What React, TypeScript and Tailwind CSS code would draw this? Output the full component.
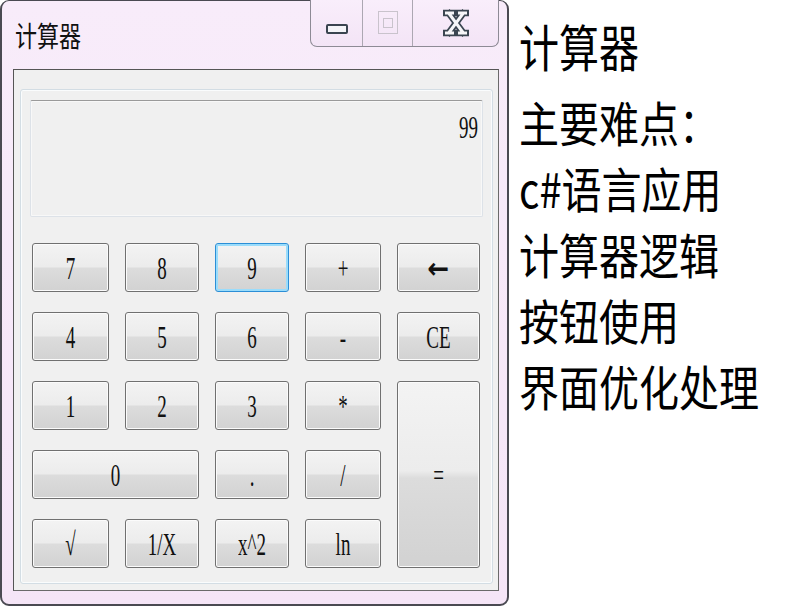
import React from "react";

const btnBase =
  "flex items-center justify-center rounded-[3px] border text-[19px] leading-none text-[#111] font-['Liberation_Serif','DejaVu_Serif',serif] bg-[linear-gradient(to_bottom,#f3f3f3_0%,#ececec_48%,#dcdcdc_52%,#d2d2d2_100%)]";

type B = { label: string; cls?: string; focus?: boolean; arrow?: boolean };

const buttons: B[] = [
  { label: "7" },
  { label: "8" },
  { label: "9", focus: true },
  { label: "+" },
  { label: "←", arrow: true },
  { label: "4" },
  { label: "5" },
  { label: "6" },
  { label: "-" },
  { label: "CE" },
  { label: "1" },
  { label: "2" },
  { label: "3" },
  { label: "*" },
  { label: "=", cls: "row-span-3" },
  { label: "0", cls: "col-span-2" },
  { label: "." },
  { label: "/" },
  { label: "√" },
  { label: "1/X" },
  { label: "x^2" },
  { label: "ln" },
];

function CalcButton({ b }: { b: B }) {
  const border = b.focus
    ? "border-[#2b8ed6] shadow-[inset_0_0_0_2px_#9adcfb]"
    : "border-[#707070] shadow-[inset_0_0_0_1px_#fbfbfb]";
  return (
    <div className={`${btnBase} ${border} ${b.cls ?? ""}`}>
      {b.arrow ? (
        <span className="inline-block scale-y-[1.1] font-['DejaVu_Sans',sans-serif] font-bold text-[26px]">{b.label}</span>
      ) : (
        <span className="inline-block scale-y-[1.7]">{b.label}</span>
      )}
    </div>
  );
}

export default function App() {
  return (
    <div className="w-[800px] h-[608px] bg-white flex font-['Noto_Sans_CJK_SC',sans-serif] overflow-hidden">
      {/* Window */}
      <div className="w-[509px] h-[606px] rounded-[9px] border border-l-2 border-b-2 border-r-2 border-[#4a4a52] bg-[linear-gradient(to_bottom,#f8ecfa_0%,#f5e5f7_100%)] flex flex-col">
        {/* Title bar */}
        <div className="h-[68px] flex items-start">
          <div className="ml-[13px] mt-[19px] text-[22px] leading-none text-[#111] font-['Noto_Sans_CJK_SC',sans-serif]">
            <span className="inline-block scale-y-[1.3] origin-top">计算器</span>
          </div>
          <div className="flex-1" />
          <div className="mr-[8px] -mt-px h-[47px] flex border border-t-0 border-[#8d8a95] rounded-b-[7px] bg-[linear-gradient(to_bottom,#f9eefb,#f3e4f6)] overflow-hidden">
            <div className="w-[52px] flex items-center justify-center border-r border-[#aca7b2]">
              <div className="mt-[12px] w-[22px] h-[10px] rounded-[2px] border-2 border-[#3a4450] bg-[#f4f4f8]" />
            </div>
            <div className="w-[50px] flex items-center justify-center border-r border-[#aca7b2]">
              <div className="-mt-[1px] w-[20px] h-[23px] border border-[#c9c3cc] flex items-center justify-center">
                <div className="w-[10px] h-[10px] border border-[#c9c3cc]" />
              </div>
            </div>
            <div className="w-[85px] flex items-center justify-center">
              <svg width="26" height="28" viewBox="0 0 26 28" className="-mt-[1px]">
                <g fill="none" strokeLinecap="square" strokeLinejoin="round">
                  <path d="M6 4.5 L20 23.5 M20 4.5 L6 23.5 M3 4 H10 M16 4 H23 M3 24 H10 M16 24 H23" stroke="#3b4651" strokeWidth="6.5" />
                  <path d="M6 4.5 L20 23.5 M20 4.5 L6 23.5 M3.5 4 H9.5 M16.5 4 H22.5 M3.5 24 H9.5 M16.5 24 H22.5" stroke="#f6f6f8" strokeWidth="3" />
                </g>
              </svg>
            </div>
          </div>
        </div>

        {/* Client area */}
        <div className="ml-[11px] mr-[8px] mb-[13px] flex-1 border border-[#6a6a6a] border-t-[#555] border-l-[#555] bg-[#f0f0f0] pl-[6px] pr-[5px] pt-[19px] pb-[6px] flex flex-col">
          {/* group box */}
          <div className="flex-1 rounded-[3px] border border-[#d3dde4] shadow-[inset_0_0_0_1px_#fafcfd] pl-[9px] pr-[9px] pt-[10px] flex flex-col">
            {/* display */}
            <div className="h-[117px] rounded-[2px] border border-[#dde2e8] border-t-[#9a9a9a] shadow-[inset_0_0_0_1px_#f8f8f8] bg-[#f0f0f0] flex justify-end items-start pr-[4px] pt-[10px]">
              <span className="inline-block scale-y-[1.7] origin-top text-[19px] leading-none text-[#111] font-['Liberation_Serif','DejaVu_Serif',serif]">
                99
              </span>
            </div>
            {/* keypad */}
            <div className="mt-[26px] ml-[2px] grid grid-cols-[77px_74px_74px_76px_83px] grid-rows-[49px_49px_49px_49px_49px] gap-x-[16px] gap-y-[20px]">
              {buttons.map((b, i) => (
                <CalcButton key={i} b={b} />
              ))}
            </div>
          </div>
        </div>
      </div>

      {/* Right notes */}
      <div className="ml-[10px] pt-[13px] flex flex-col text-[40px] leading-[66px] text-black font-['Noto_Sans_CJK_SC',sans-serif]">
        <div className="mb-[10px]"><span className="inline-block scale-y-[1.26]">计算器</span></div>
        <div><span className="inline-block scale-y-[1.2]">主要难点：</span></div>
        <div><span className="inline-block scale-y-[1.2]">c#语言应用</span></div>
        <div><span className="inline-block scale-y-[1.2]">计算器逻辑</span></div>
        <div><span className="inline-block scale-y-[1.2]">按钮使用</span></div>
        <div><span className="inline-block scale-y-[1.2]">界面优化处理</span></div>
      </div>
    </div>
  );
}
